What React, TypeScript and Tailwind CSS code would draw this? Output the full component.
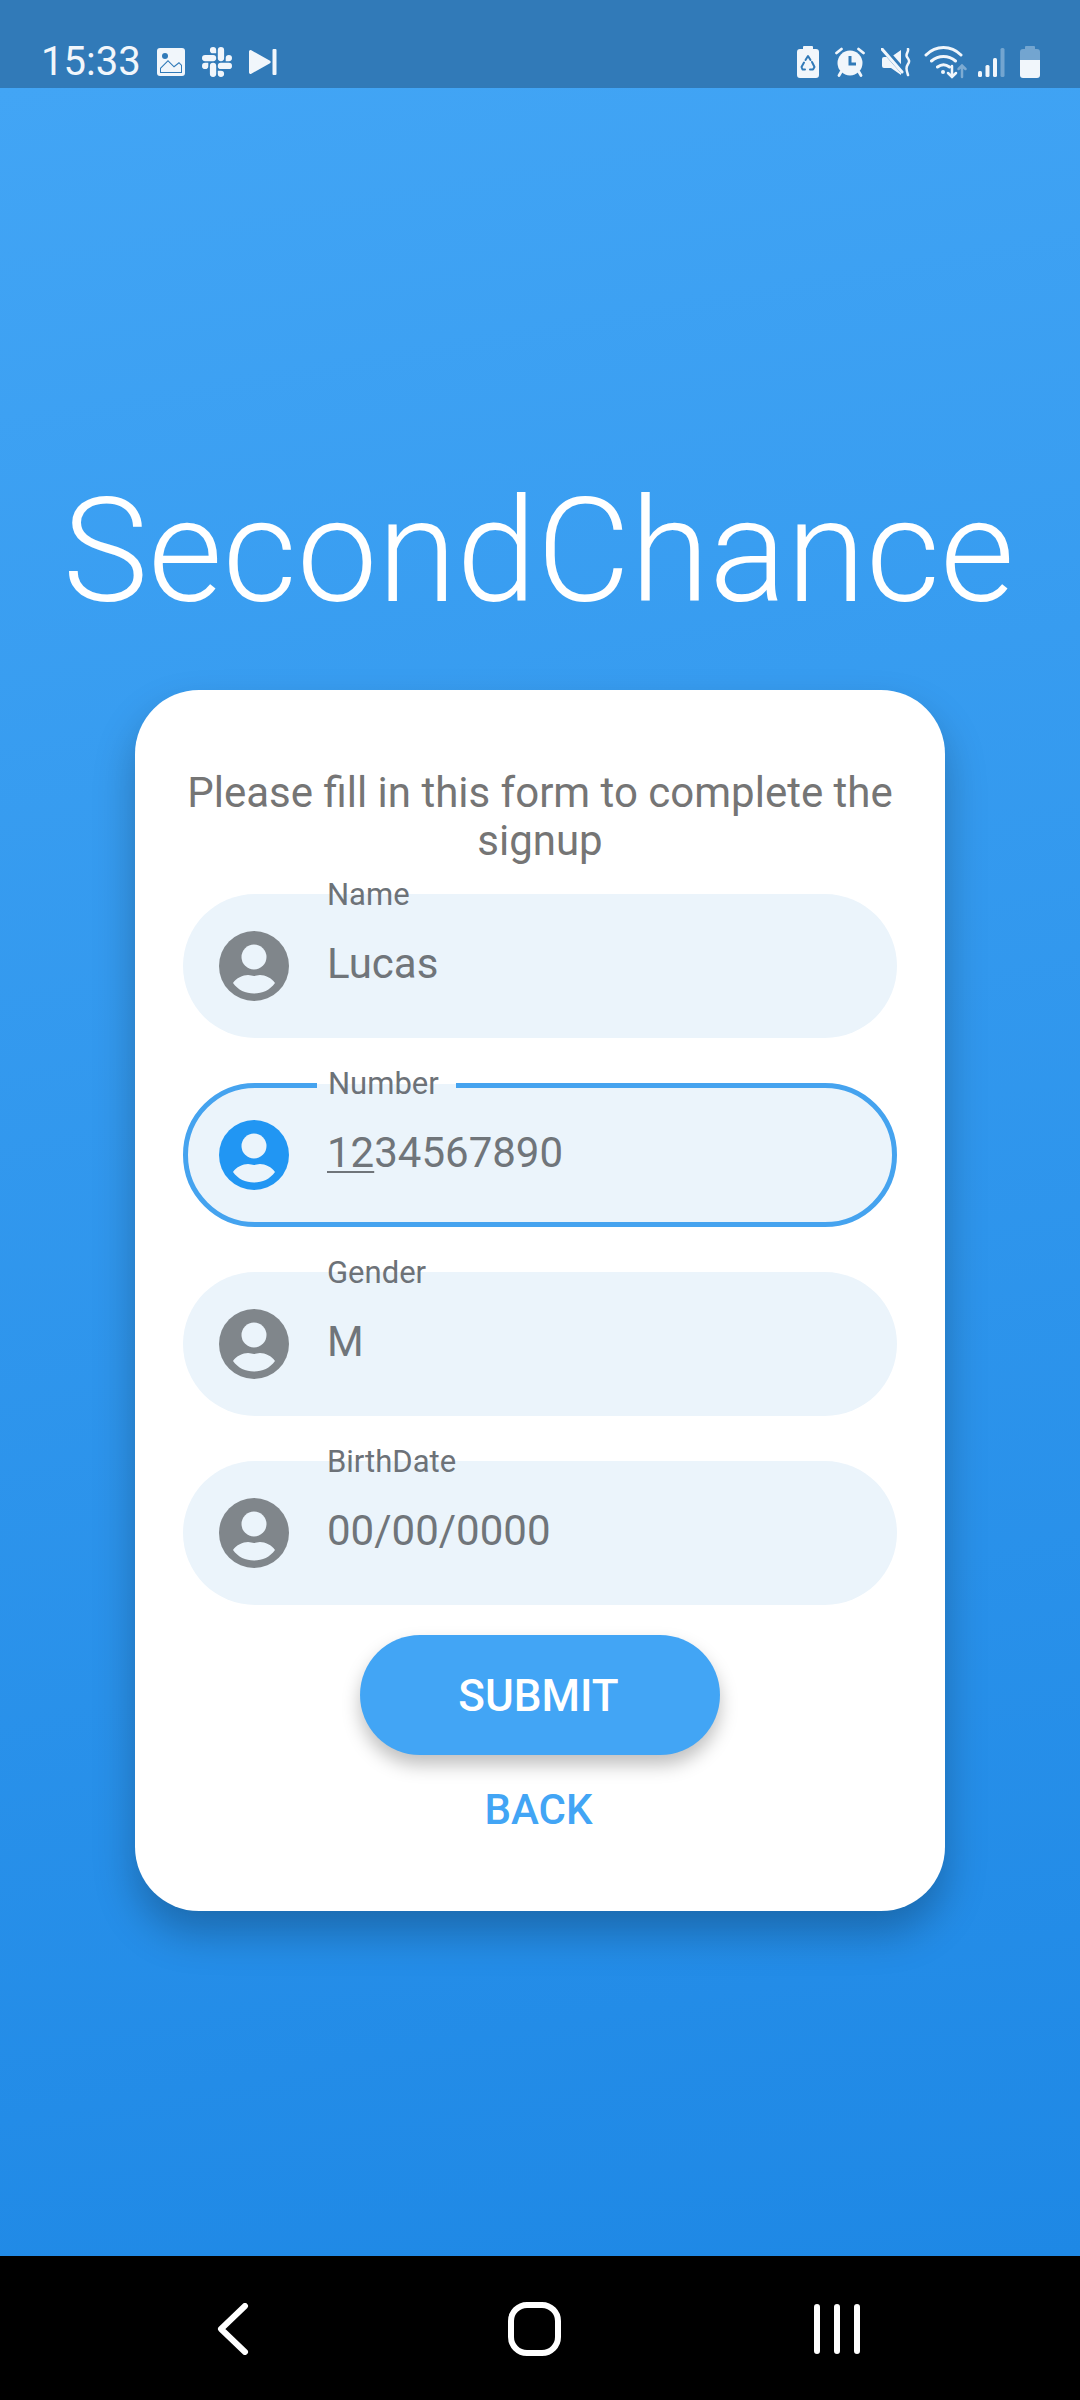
import { SiSlack } from 'react-icons/si';

const WHITE = '#f1f6fb';

function PersonIcon({ color }: { color: string }) {
  return (
    <svg width="70" height="70" viewBox="0 0 70 70" className="shrink-0">
      <circle cx="35" cy="35" r="35" fill={color} />
      <circle cx="35" cy="26" r="12.5" fill="#ebf4fb" />
      <path d="M14 52c3-5 10-8 15-8 2.500 0 4 1 6 1s3.500-1 6-1c5 0 12 3 15 8-5 7-12.500 10.500-21 10.500S19 59 14 52z" fill="#ebf4fb" />
    </svg>
  );
}

function Field({ label, value, focused }: { label: string; value: string; focused?: boolean }) {
  return (
    <div
      className={`relative h-[144px] rounded-[72px] bg-[#ebf4fb] flex items-center ${
        focused ? 'border-[5px] border-[#45a3ef] pl-[31px]' : 'pl-[36px]'
      }`}
    >
      <span
        className={`absolute leading-[36px] text-[31px] text-[#6d7278] ${
          focused
            ? '-top-[22px] left-[129px] pl-[11px] pr-[17px] bg-[linear-gradient(to_bottom,#ffffff_50%,#ebf4fb_50%)]'
            : 'left-[144px] -top-[17px]'
        }`}
      >
        {label}
      </span>
      <PersonIcon color={focused ? '#2196f3' : '#80868b'} />
      <span className="ml-[38px] text-[42px] leading-[48px] text-[#70757a] -mt-[4px]">
        {focused ? (
          <>
            <span className="underline decoration-[2px] underline-offset-[4px]">12</span>34567890
          </>
        ) : (
          value
        )}
      </span>
    </div>
  );
}

function StatusBar() {
  return (
    <div className="h-[88px] shrink-0 bg-[#317ab8] flex items-center justify-between pt-[36px] pl-[41px] pr-[40px]">
      <div className="flex items-center">
        <span className="text-[40px] leading-[40px] font-normal" style={{ color: WHITE }}>15:33</span>
        {/* gallery */}
        <svg width="28" height="28" viewBox="0 0 28 28" className="ml-[16px]">
          <rect width="28" height="28" rx="3" fill={WHITE} />
          <path d="M3 25v-5l8-8 6 6 5-4 3 3v8z" fill="#317ab8" />
          <path d="M4 24v-3.500l7-7 6 6 5-4 2 2V24z" fill={WHITE} />
          <circle cx="8" cy="8" r="3" fill="#317ab8" />
        </svg>
        <SiSlack size={30} color={WHITE} className="ml-[17px]" />
        {/* media next */}
        <svg width="28" height="26" viewBox="0 0 28 26" className="ml-[17px]" fill={WHITE}>
          <path d="M0 2.500v21a1.500 1.500 0 0 0 2.300 1.200L21 14.200a1.400 1.400 0 0 0 0-2.400L2.300 1.300A1.500 1.500 0 0 0 0 2.500z" />
          <rect x="23.500" y="0" width="4" height="26" rx="1" />
        </svg>
      </div>
      <div className="flex items-center">
        {/* battery saver */}
        <svg width="22" height="32" viewBox="0 0 22 32">
          <path d="M7 0h8a1 1 0 0 1 1 1v2h3a3 3 0 0 1 3 3v23a3 3 0 0 1-3 3H3a3 3 0 0 1-3-3V6a3 3 0 0 1 3-3h3V1a1 1 0 0 1 1-1z" fill={WHITE} />
          <path d="M8.500 14l2.500-4 2.500 4M15 16l2.500 5-1.500 2.500h-3M8 23.500H5.500L4.500 21l2.500-4.500" fill="none" stroke="#317ab8" strokeWidth="2" strokeLinecap="round" strokeLinejoin="round" />
        </svg>
        {/* alarm */}
        <svg width="30" height="30" viewBox="0 0 30 30" className="ml-[16px]">
          <circle cx="15" cy="16" r="12.500" fill={WHITE} />
          <path d="M1.500 6l5-4M28.500 6l-5-4M6 25l-2 3.500M24 25l2 3.500" stroke={WHITE} strokeWidth="2.800" strokeLinecap="round" />
          <path d="M15 9v8h6" fill="none" stroke="#317ab8" strokeWidth="3" />
        </svg>
        {/* muted */}
        <svg width="30" height="29" viewBox="0 0 30 29" className="ml-[16px]">
          <path d="M20 2v25L10 20H3a2 2 0 0 1-2-2v-7a2 2 0 0 1 2-2h7z" fill={WHITE} />
          <path d="M0 -2l22 25" stroke="#317ab8" strokeWidth="6" />
          <path d="M1 1l20 23" stroke={WHITE} strokeWidth="3" strokeLinecap="round" />
          <path d="M27 1c1 3-3 5-1 8s3 4 1 7-2 5 0 11" fill="none" stroke={WHITE} strokeWidth="2.500" strokeLinecap="round" />
        </svg>
        {/* wifi with arrows */}
        <svg width="44" height="34" viewBox="0 0 44 34" className="ml-[13px]">
          <path d="M2 10C12 0 27 0 37 10M7.500 16c7-6 17-6 24 0M13.500 22c4-3 8-3 12 0" fill="none" stroke={WHITE} strokeWidth="3" strokeLinecap="round" />
          <circle cx="19" cy="27" r="2" fill={WHITE} />
          <path d="M28 21v11M24 28l4 4 4-4" fill="none" stroke={WHITE} strokeWidth="2.500" strokeLinecap="round" />
          <path d="M38 32V21M34.500 24l3.500-3.500 3.500 3.500" fill="none" stroke={WHITE} strokeOpacity="0.4" strokeWidth="2.500" strokeLinecap="round" />
        </svg>
        {/* signal */}
        <svg width="27" height="29" viewBox="0 0 27 29" className="ml-[10px]">
          <rect x="0" y="23" width="4" height="6" rx="1.500" fill={WHITE} />
          <rect x="7.500" y="17" width="4" height="12" rx="1.500" fill={WHITE} />
          <rect x="15" y="10" width="4" height="19" rx="1.500" fill={WHITE} />
          <rect x="22.500" y="0" width="4" height="29" rx="1.500" fill={WHITE} fillOpacity="0.35" />
        </svg>
        {/* battery */}
        <svg width="20" height="32" viewBox="0 0 20 32" className="ml-[15px]">
          <path d="M6 0h8a1 1 0 0 1 1 1v2h2a3 3 0 0 1 3 3v8H0V6a3 3 0 0 1 3-3h2V1a1 1 0 0 1 1-1z" fill={WHITE} fillOpacity="0.35" />
          <path d="M0 14h20v15a3 3 0 0 1-3 3H3a3 3 0 0 1-3-3z" fill={WHITE} />
        </svg>
      </div>
    </div>
  );
}

function NavBar() {
  return (
    <div className="h-[144px] shrink-0 bg-black flex items-center">
      <svg width="32" height="52" viewBox="0 0 32 52" className="ml-[217px] mt-[2px]">
        <path d="M28 3L4 26l24 23" fill="none" stroke="#fff" strokeWidth="6" strokeLinecap="round" strokeLinejoin="round" />
      </svg>
      <svg width="53" height="54" viewBox="0 0 53 54" className="ml-[259px] mt-[2px]">
        <rect x="3" y="3" width="47" height="48" rx="16" fill="none" stroke="#fff" strokeWidth="6" />
      </svg>
      <svg width="48" height="50" viewBox="0 0 48 50" className="ml-[253px] mt-[2px]">
        <path d="M3 3v44M23 3v44M43 3v44" fill="none" stroke="#fff" strokeWidth="6" strokeLinecap="round" />
      </svg>
    </div>
  );
}

export default function App() {
  return (
    <div
      className="w-[1080px] h-[2400px] flex flex-col overflow-hidden bg-[#1e88e5]"
      style={{ fontFamily: 'Roboto, sans-serif' }}
    >
      <StatusBar />
      <main className="flex-1 flex flex-col items-center bg-[linear-gradient(170deg,#42a5f5,#1e88e5)]">
        <h1 className="mt-[376px] pr-[3px] text-[144px] leading-[176px] font-light text-white whitespace-nowrap">SecondChance</h1>
        <div className="mt-[50px] w-[810px] h-[1221px] bg-white rounded-[64px] shadow-[0_22px_40px_rgba(0,0,0,0.25)] px-[48px] pt-[79px] flex flex-col">
          <p className="text-center text-[42px] leading-[48px] text-[#757575]">
            Please fill in this form to complete the signup
          </p>
          <div className="mt-[29px] flex flex-col gap-[45px]">
            <Field label="Name" value="Lucas" />
            <Field label="Number" value="1234567890" focused />
            <Field label="Gender" value="M" />
            <Field label="BirthDate" value="00/00/0000" />
          </div>
          <button className="self-center mt-[30px] w-[360px] h-[120px] pr-[3px] pt-[2px] rounded-[60px] bg-[#42a5f5] text-white text-[44px] font-medium shadow-[0_10px_18px_rgba(0,0,0,0.25)]">
            SUBMIT
          </button>
          <button className="self-center mt-[27px] mr-[3px] text-[#42a5f5] text-[42px] leading-[56px] font-medium">BACK</button>
        </div>
      </main>
      <NavBar />
    </div>
  );
}
